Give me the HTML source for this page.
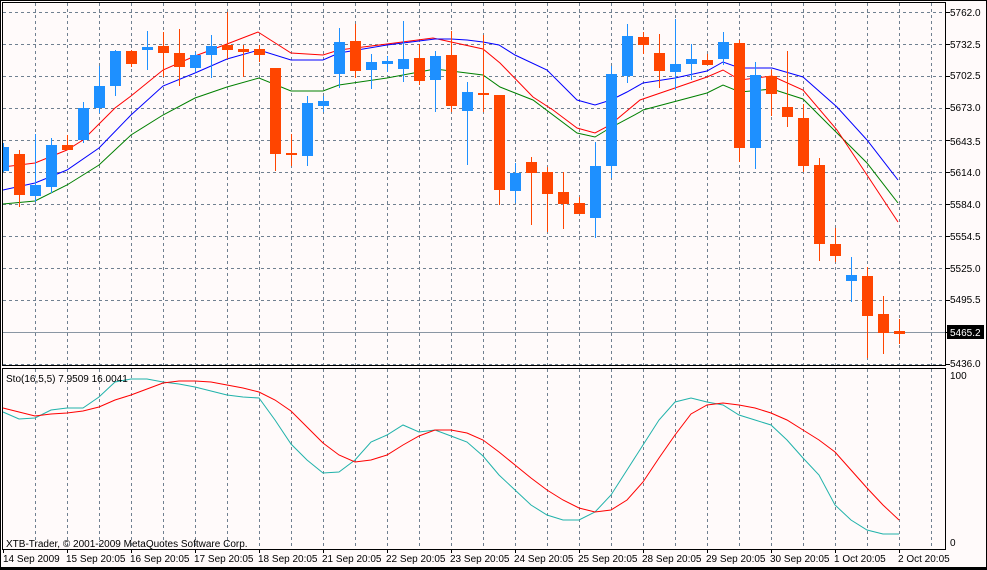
<!DOCTYPE html>
<html><head><meta charset="utf-8"><style>
html,body{margin:0;padding:0;background:#000;}
svg{display:block;font-family:"Liberation Sans",sans-serif;font-size:10px;}
</style></head><body>
<svg id="s" width="987" height="570" xmlns="http://www.w3.org/2000/svg">
<rect x="0" y="0" width="987" height="567" fill="#fffafa"/>
<rect x="0" y="567" width="987" height="3" fill="#000"/>
<rect x="0" y="0" width="987" height="1" fill="#000"/>
<rect x="986" y="0" width="1" height="570" fill="#000"/>
<rect x="0" y="0" width="1" height="570" fill="#000"/>
<g id="grid" stroke="#708090" stroke-dasharray="3,3" stroke-width="1"></g>
<line x1="2" y1="332.5" x2="945" y2="332.5" stroke="#8a96a3"/>
<g id="ma"></g>
<g id="cd"></g>
<g id="st"></g>
<rect x="2.5" y="2.5" width="943" height="363" fill="none" stroke="#000"/>
<rect x="2.5" y="368.5" width="943" height="181" fill="none" stroke="#000"/>
<g id="ticks" stroke="#000"></g>
<g fill="#000">
<text x="950" y="16">5762.0</text>
<text x="950" y="48">5732.5</text>
<text x="950" y="79">5702.5</text>
<text x="950" y="111">5673.0</text>
<text x="950" y="145">5643.5</text>
<text x="950" y="176">5614.0</text>
<text x="950" y="208">5584.0</text>
<text x="950" y="240">5554.5</text>
<text x="950" y="272">5525.0</text>
<text x="950" y="303">5495.5</text>
<text x="950" y="367">5436.0</text>
<text x="950" y="379">100</text>
<text x="950" y="546">0</text>
<text x="6" y="382">Sto(16,5,5) 7.9509 16.0041</text>
<text x="6" y="547">XTB-Trader, © 2001-2009 MetaQuotes Software Corp.</text>
<text x="3" y="562">14 Sep 2009</text>
<text x="66" y="562">15 Sep 20:05</text>
<text x="130" y="562">16 Sep 20:05</text>
<text x="194" y="562">17 Sep 20:05</text>
<text x="258" y="562">18 Sep 20:05</text>
<text x="322" y="562">21 Sep 20:05</text>
<text x="386" y="562">22 Sep 20:05</text>
<text x="450" y="562">23 Sep 20:05</text>
<text x="514" y="562">24 Sep 20:05</text>
<text x="578" y="562">25 Sep 20:05</text>
<text x="642" y="562">28 Sep 20:05</text>
<text x="706" y="562">29 Sep 20:05</text>
<text x="770" y="562">30 Sep 20:05</text>
<text x="834" y="562">1 Oct 20:05</text>
<text x="898" y="562">2 Oct 20:05</text>
</g>
<rect x="947" y="325" width="37" height="14" fill="#000"/>
<text x="950" y="336" fill="#fff">5465.2</text>
</svg>
<script>
var NS="http://www.w3.org/2000/svg";
function el(p,t,a){var e=document.createElementNS(NS,t);for(var k in a)e.setAttribute(k,a[k]);document.getElementById(p).appendChild(e);return e;}
for(var x=35;x<945;x+=32){el('grid','line',{x1:x+.5,y1:3,x2:x+.5,y2:365});el('grid','line',{x1:x+.5,y1:369,x2:x+.5,y2:549});}
for(var y=12;y<=364;y+=32){if(y==332)continue;el('grid','line',{x1:3,y1:y+.5,x2:945,y2:y+.5});}
for(var y=12;y<=364;y+=32)el('ticks','line',{x1:946,y1:y+.5,x2:950,y2:y+.5});
for(var x=3;x<945;x+=64)el('ticks','line',{x1:x+.5,y1:549,x2:x+.5,y2:553});
var C=[
['b',143,147,171,172],['o',150,154,195,207],['b',134,185,196,202],['b',138,145,187,193],['o',135,145,150,150],
['b',102,108,140,143],['b',66,86,108,113],['b',50,51,86,96],['o',50,51,64,67],['b',31,47,50,70],
['o',32,46,53,77],['o',29,53,67,86],['b',52,55,68,72],['b',35,46,55,78],['o',12,45,50,59],
['o',45,49,52,77],['o',45,49,55,62],['o',68,68,154,171],['o',134,153,154,166],['b',96,103,156,166],
['b',96,101,106,112],['b',28,42,74,88],['o',24,41,71,78],['b',54,62,70,89],['b',56,61,64,72],
['b',21,59,69,82],['o',44,58,81,85],['b',51,56,80,112],['o',31,55,106,112],['b',82,92,111,165],
['o',35,93,95,112],['o',95,95,190,205],['b',163,173,191,203],['o',157,162,173,225],['o',167,172,194,232],
['o',172,192,204,229],['o',197,203,214,214],['b',142,166,218,238],['b',66,74,166,178],['b',24,36,76,83],
['o',32,37,45,54],['o',34,53,71,88],['b',19,64,72,90],['b',44,59,64,80],['o',54,60,65,65],
['b',32,42,59,65],['o',40,43,148,162],['b',62,75,148,169],['o',70,76,94,116],['o',51,107,117,127],
['o',104,118,166,172],['o',158,165,244,261],['o',228,244,256,262],['b',257,275,281,302],['o',267,276,316,358],
['o',296,314,333,354],['o',319,331,334,344]];
C.forEach(function(c,k){var x=3+16*k,col=c[0]=='b'?'#1e90ff':'#ff4500';
 el('cd','rect',{x:x,y:c[1],width:1,height:c[4]-c[1],fill:col});
 var x0=Math.max(3,x-5);el('cd','rect',{x:x0,y:c[2],width:x+6-x0,height:Math.max(2,c[3]-c[2]),fill:col});});
function pl(g,pts,col){el(g,'polyline',{points:pts.map(function(p){return p.join(',')}).join(' '),fill:'none',stroke:col,'stroke-width':1});}
pl('ma',[[3,204],[35,201],[67,185],[99,165],[131,135],[163,115],[195,98],[227,87],[259,78],[291,91],[323,91],[339,85],[387,78],[435,69],[483,75],[500,87],[533,100],[577,133],[595,137],[610,128],[640,112],[643,110],[707,93],[723,85],[740,92],[772,89],[803,99],[837,133],[867,163],[898,203]],'#008000');
pl('ma',[[3,167],[35,163],[67,150],[83,140],[100,123],[115,108],[131,96],[163,70],[195,56],[227,44],[258,32],[291,53],[323,55],[339,50],[387,44],[433,38],[483,49],[500,63],[533,97],[553,110],[577,128],[595,133],[610,125],[640,100],[675,88],[707,77],[723,70],[740,80],[772,76],[803,90],[837,130],[867,175],[898,222]],'#ff0000');
pl('ma',[[3,190],[35,183],[67,170],[99,148],[131,115],[163,86],[195,73],[227,59],[259,50],[291,60],[323,60],[339,53],[387,45],[435,39],[451,39],[467,40],[483,42],[499,45],[515,55],[547,70],[577,100],[595,105],[611,100],[627,92],[643,83],[675,78],[707,71],[723,62],[740,68],[772,68],[803,77],[837,107],[867,140],[898,180]],'#0000ff');
var xs=[3,19,35,51,67,83,99,115,131,147,163,179,195,211,227,243,259,275,291,307,323,339,355,371,387,403,419,435,451,467,483,499,515,531,547,563,579,595,611,627,643,659,675,691,707,723,739,755,771,787,803,819,835,851,867,883,899];
var T=[412,419,418,410,408,408,397,382,379,379,382,384,387,391,395,397,398,420,444,460,473,472,460,442,435,425,432,430,436,442,456,475,490,505,515,520,520,512,495,470,445,420,402,398,402,405,415,420,425,440,458,475,505,520,530,534,534];
var R=[408,412,416,414,413,411,407,400,395,389,383,381,381,382,385,388,392,400,411,427,443,455,462,460,455,445,436,430,430,433,440,452,465,478,490,500,508,512,510,500,482,458,435,414,405,403,405,408,413,420,430,440,452,470,488,505,520];
pl('st',xs.map(function(x,i){return [x,T[i]]}),'#20b2aa');
pl('st',xs.map(function(x,i){return [x,R[i]]}),'#ff0000');
</script>
</body></html>
